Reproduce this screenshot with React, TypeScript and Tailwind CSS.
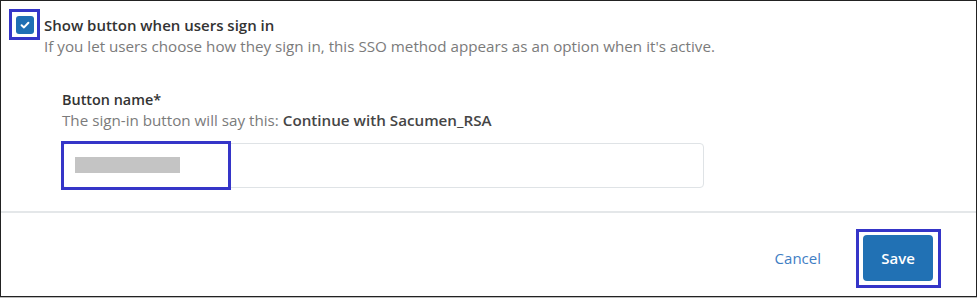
import React from "react";

export default function App() {
  return (
    <div
      className="w-[979px] h-[298px] bg-white"
      style={{ fontFamily: '"Open Sans", "Noto Sans", Arial, sans-serif' }}
    >
      <div className="w-[977px] h-[297px] border border-[#222] shadow-[0_1px_0_#bbb] flex flex-col">
        {/* Top row */}
        <div className="flex pt-[8px] pl-[8px]">
          <div className="w-[31px] h-[31px] border-[3px] border-[#3535c8] flex items-center justify-center shrink-0">
            <div className="w-[18px] h-[18px] rounded-[3px] bg-[#1f6fb4] flex items-center justify-center">
              <svg width="12" height="12" viewBox="0 0 12 12" fill="none">
                <path d="M2.6 6.2 L5 8.4 L9.4 3.8" stroke="white" strokeWidth="2" strokeLinecap="round" strokeLinejoin="round" />
              </svg>
            </div>
          </div>
          <div className="pt-[5px] pl-[4px]">
            <div className="text-[15px] leading-[22px] font-semibold text-[#333]">
              Show button when users sign in
            </div>
            <div className="text-[15.2px] leading-[21px] text-[#7b7b7b]">
              If you let users choose how they sign in, this SSO method appears as an option when it's active.
            </div>
          </div>
        </div>

        {/* Button name section */}
        <div className="pl-[61px] mt-[32px]">
          <div className="text-[14.4px] leading-[21px] font-semibold text-[#333]">Button name*</div>
          <div className="text-[15.2px] leading-[21px] text-[#7b7b7b]">
            The sign-in button will say this: <span className="font-semibold text-[#454545]">Continue with Sacumen_RSA</span>
          </div>
          <div className="relative mt-[12px] w-[642px] h-[45px] border border-[#dfe3e6] rounded-[4px]">
            <div className="absolute left-[12px] top-[13px] w-[105px] h-[16px] bg-[#c4c4c4]" />
            <div className="absolute left-[-2px] top-[-3px] w-[170px] h-[49px] border-[3px] border-[#3535c8]" />
          </div>
        </div>

        <div className="mt-[23px] h-[2px] bg-[#e4e7e9]" />

        {/* Footer */}
        <div className="flex justify-end items-center pt-[16px] pr-[35px]">
          <span className="text-[15px] text-[#3f7ec4] mr-[35px]">Cancel</span>
          <div className="border-[3px] border-[#3535c8] pt-[3px] pb-[4px] pl-[4px] pr-[5px]">
            <button className="w-[70px] h-[46px] rounded-[4px] bg-[#2171b4] text-white text-[15px] font-semibold">
              Save
            </button>
          </div>
        </div>
      </div>
    </div>
  );
}
